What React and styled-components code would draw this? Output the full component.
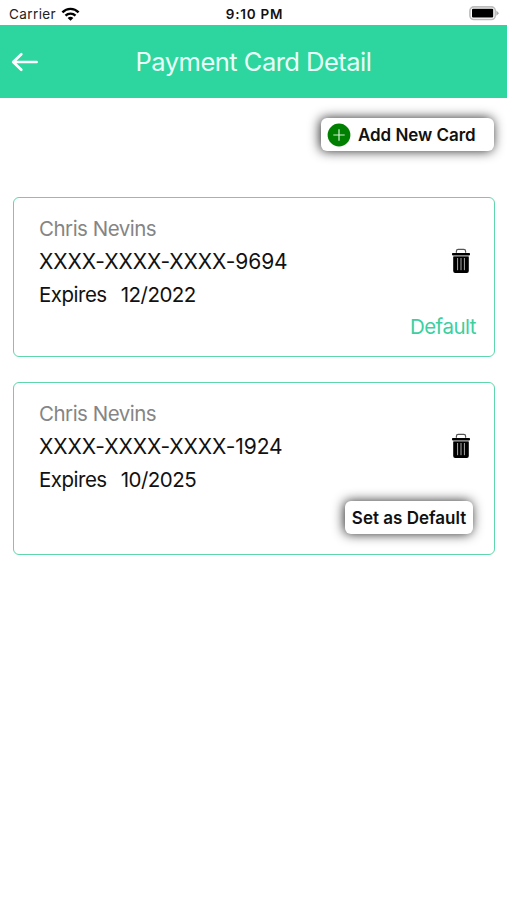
import React, { useState } from "react";
import styled, { createGlobalStyle } from "styled-components";

const initialCards = [
  { id: 1, name: "Chris Nevins", last4: "9694", expires: "12/2022" },
  { id: 2, name: "Chris Nevins", last4: "1924", expires: "10/2025" },
];

const TrashIcon = () => (
  <svg width="20" height="26" viewBox="0 0 20 26">
    <path
      d="M5.4 4.8V3.2Q5.4 1.4 7.2 1.4H12.8Q14.6 1.4 14.6 3.2V4.8"
      fill="none"
      stroke="#555"
      strokeWidth="1.2"
    />
    <rect x="1" y="4.9" width="18" height="2.5" rx="0.8" fill="#000" />
    <rect x="2.8" y="7.4" width="14.4" height="1.2" fill="#888" />
    <path d="M2.2 8.6H17.8V23Q17.8 25 15.8 25H4.2Q2.2 25 2.2 23Z" fill="#000" />
    <path
      d="M6.6 10V22.2M10 10V22.2M13.4 10V22.2"
      stroke="#aaa"
      strokeWidth="1"
    />
  </svg>
);

const App = () => {
  const [cards, setCards] = useState(initialCards);
  const [defaultId, setDefaultId] = useState(1);

  const removeCard = (id) => {
    setCards(cards.filter((card) => card.id !== id));
  };

  return (
    <>
      <GlobalStyle />
      <StatusBar>
        <Carrier>
          <span>Carrier</span>
          <svg width="19" height="14" viewBox="0 0 18 14">
            <g fill="none" stroke="#000" strokeWidth="2.4">
              <path d="M0.9 5.3C5.4 0.7 12.6 0.7 17.1 5.3" />
              <path d="M4 8.6C6.8 5.9 11.2 5.9 14 8.6" />
            </g>
            <path d="M6.1 10.9Q9 8.6 11.9 10.9L9 13.8Z" fill="#000" />
          </svg>
        </Carrier>
        <Time>9:10 PM</Time>
        <Battery>
          <svg width="32" height="15" viewBox="0 0 32 15">
            <rect
              x="1.9"
              y="0.9"
              width="25.4"
              height="12.6"
              rx="4"
              fill="#fff"
              stroke="#bdbdbd"
              strokeWidth="1.6"
            />
            <rect x="4" y="2.8" width="21.2" height="8.8" rx="1" fill="#000" />
            <path d="M28.4 4.6L31 7.2L28.4 9.8Z" fill="#aaa" />
          </svg>
        </Battery>
      </StatusBar>

      <Header>
        <BackButton aria-label="Back">
          <svg width="28" height="20" viewBox="0 0 28 20">
            <path
              d="M10.3 2.2L2.2 10L10.3 17.8M2.6 10H25.6"
              fill="none"
              stroke="#fff"
              strokeWidth="2.7"
              strokeLinecap="round"
              strokeLinejoin="round"
            />
          </svg>
        </BackButton>
        <Title>Payment Card Detail</Title>
      </Header>

      <Actions>
        <AddButton>
          <svg width="24" height="24" viewBox="0 0 24 24">
            <circle cx="12" cy="12" r="11.4" fill="#008000" />
            <path d="M12 6.3V17.7M6.3 12H17.7" stroke="#d4f0d4" strokeWidth="1.2" />
          </svg>
          <span>Add New Card</span>
        </AddButton>
      </Actions>

      <CardList>
        {cards.map((card) => (
          <Card key={card.id} $isDefault={card.id === defaultId}>
            <Name>{card.name}</Name>
            <NumberRow>
              <CardNumber>XXXX-XXXX-XXXX-{card.last4}</CardNumber>
              <DeleteButton
                aria-label="Delete card"
                onClick={() => removeCard(card.id)}
              >
                <TrashIcon />
              </DeleteButton>
            </NumberRow>
            <Expiry>
              <span>Expires</span>
              <span>{card.expires}</span>
            </Expiry>
            {card.id === defaultId ? (
              <DefaultLabel>Default</DefaultLabel>
            ) : (
              <DefaultButton onClick={() => setDefaultId(card.id)}>
                Set as Default
              </DefaultButton>
            )}
          </Card>
        ))}
      </CardList>
    </>
  );
};

const GlobalStyle = createGlobalStyle`
  * {
    box-sizing: border-box;
  }
  body {
    margin: 0;
    background: #fff;
    color: #111;
    font-family: Inter, "Liberation Sans", sans-serif;
  }
  svg {
    display: block;
    flex-shrink: 0;
  }
  button {
    font-family: inherit;
    color: inherit;
    border: none;
    cursor: pointer;
  }
`;

const StatusBar = styled.div`
  display: grid;
  grid-template-columns: 1fr auto 1fr;
  align-items: center;
  height: 25px;
  padding: 2px 7px 0 9px;
  font-size: 13.5px;
`;

const Carrier = styled.div`
  display: flex;
  align-items: center;
  gap: 5px;
  color: #222;
  letter-spacing: 0.4px;
`;

const Time = styled.div`
  font-weight: 600;
  font-size: 13.5px;
  letter-spacing: 0.75px;
`;

const Battery = styled.div`
  display: flex;
  justify-content: flex-end;
`;

const Header = styled.header`
  display: grid;
  grid-template-columns: 60px 1fr 60px;
  align-items: center;
  height: 73px;
  background: #2dd69e;
`;

const BackButton = styled.button`
  padding: 0 0 0 11px;
  background: none;
`;

const Title = styled.h1`
  margin: 0;
  color: #e9fff7;
  font-size: 25.5px;
  font-weight: 400;
  letter-spacing: -0.52px;
  text-align: center;
  white-space: nowrap;
`;

const Actions = styled.div`
  display: flex;
  justify-content: flex-end;
  padding: 20px 13px 0;
`;

const RaisedButton = styled.button`
  background: #fff;
  color: #111;
  font-weight: 600;
  border-radius: 6px;
  box-shadow: -1px 0 12px rgba(0, 0, 0, 0.85);
  white-space: nowrap;
`;

const AddButton = styled(RaisedButton)`
  display: flex;
  align-items: center;
  gap: 7px;
  width: 173px;
  height: 33px;
  padding: 0 0 0 6px;
  font-size: 17px;
  letter-spacing: -0.05px;
`;

const CardList = styled.main`
  display: flex;
  flex-direction: column;
  gap: 25px;
  padding: 46px 12px 0 13px;
`;

const Card = styled.section`
  display: flex;
  flex-direction: column;
  height: ${({ $isDefault }) => ($isDefault ? "160px" : "173px")};
  padding: 14px 18px 0 25px;
  border: 1.5px solid #5fd6ac;
  border-radius: 6px;
  font-size: 20.5px;
  line-height: 33px;
  letter-spacing: -0.5px;
`;

const Name = styled.div`
  color: #858585;
`;

const NumberRow = styled.div`
  display: flex;
  justify-content: space-between;
  align-items: center;
  height: 33px;
`;

const CardNumber = styled.span`
  font-size: 21px;
  letter-spacing: -0.07px;
`;

const DeleteButton = styled.button`
  padding: 0 0 1px;
  margin-right: 5px;
  background: none;
`;

const Expiry = styled.div`
  display: flex;
  gap: 14px;
`;

const DefaultLabel = styled.div`
  align-self: flex-end;
  line-height: 31px;
  color: #3bd09f;
`;

const DefaultButton = styled(RaisedButton)`
  align-self: flex-end;
  width: 128px;
  height: 33px;
  margin: 5px 3px 0 0;
  padding: 0;
  font-size: 17px;
`;

export default App;
